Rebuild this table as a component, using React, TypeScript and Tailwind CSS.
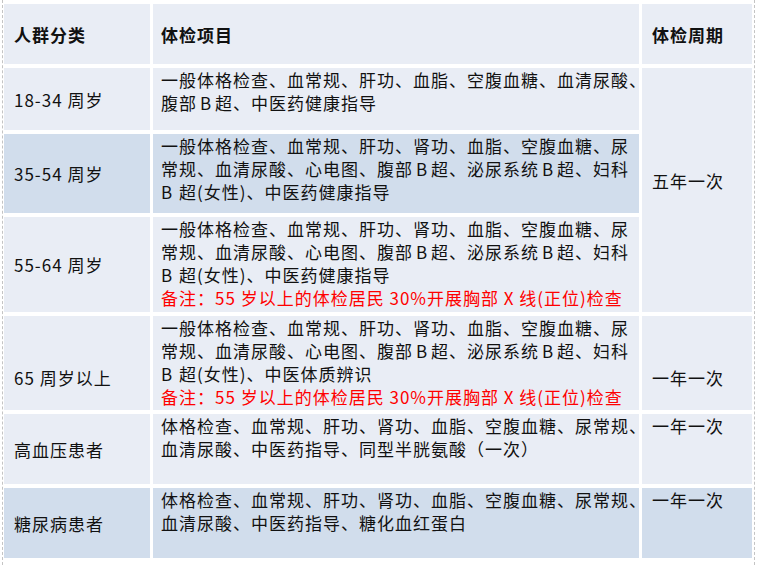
import type { ReactNode } from "react";

const light = "bg-[#e9edf5]";
const dark = "bg-[#d1ddec]";

const B = ({ start }: { start?: boolean }) => (
  <span className={`inline-block w-[18px] ${start ? "text-left" : "text-center"}`}>B</span>
);

const note = "备注：55 岁以上的体检居民 30%开展胸部 X 线(正位)检查";

const line1 = "一般体格检查、血常规、肝功、肾功、血脂、空腹血糖、尿";
const line2 = (
  <>
    常规、血清尿酸、心电图、腹部<B />超、泌尿系统<B />超、妇科
  </>
);

type Row = { group: string; bg: string; lines: ReactNode[]; note?: boolean; offset?: boolean };

const rows: Row[] = [
  {
    group: "18-34 周岁",
    bg: light,
    lines: [
      "一般体格检查、血常规、肝功、血脂、空腹血糖、血清尿酸、",
      <>
        腹部<B />超、中医药健康指导
      </>,
    ],
  },
  {
    group: "35-54 周岁",
    bg: dark,
    lines: [line1, line2, <><B start />超(女性)、中医药健康指导</>],
  },
  {
    group: "55-64 周岁",
    bg: light,
    lines: [line1, line2, <><B start />超(女性)、中医药健康指导</>],
    note: true,
  },
  {
    group: "65 周岁以上",
    bg: light,
    lines: [line1, line2, <><B start />超(女性)、中医体质辨识</>],
    note: true,
    offset: true,
  },
  {
    group: "高血压患者",
    bg: light,
    lines: ["体格检查、血常规、肝功、肾功、血脂、空腹血糖、尿常规、", "血清尿酸、中医药指导、同型半胱氨酸（一次）"],
  },
  {
    group: "糖尿病患者",
    bg: dark,
    lines: ["体格检查、血常规、肝功、肾功、血脂、空腹血糖、尿常规、", "血清尿酸、中医药指导、糖化血红蛋白"],
  },
];

export default function App() {
  return (
    <div className="h-[565px] w-[757px] bg-white font-['Noto_Sans_CJK_SC',sans-serif] text-[17px] leading-[23px] tracking-[1px] text-[#111]">
      <div className="ml-[2px] h-full w-[753px] border-x border-dashed border-[#c4c4c4] pl-[1px] pt-[4px]">
        <div className="grid grid-cols-[146px_486px_110px] grid-rows-[60px_62px_79px_95px_94px_70px_70px] gap-x-[3px] gap-y-[4px]">
          <div className={`${light} flex items-center pl-[10px] font-bold`}>人群分类</div>
          <div className={`${light} flex items-center pl-[8px] font-bold`}>体检项目</div>
          <div className={`${light} flex items-center pl-[10px] font-bold`}>体检周期</div>

          {rows.map((row, i) => (
            <>
              <div
                key={`g${i}`}
                className={`${row.bg} flex items-center pl-[10px] ${row.offset ? "pt-[28px]" : ""}`}
              >
                {row.group}
              </div>
              <div key={`l${i}`} className={`${row.bg} pl-[8px] whitespace-nowrap`}>
                {row.lines.map((line, j) => (
                  <div key={j}>{line}</div>
                ))}
                {row.note && <div className="text-[#ff0000]">{note}</div>}
              </div>
              {i === 0 && (
                <div className={`${light} row-span-3 pl-[10px] pt-[101px]`}>五年一次</div>
              )}
              {i === 3 && <div className={`${light} pl-[10px] pt-[50px]`}>一年一次</div>}
              {i === 4 && <div className={`${light} pl-[10px]`}>一年一次</div>}
              {i === 5 && <div className={`${dark} pl-[10px]`}>一年一次</div>}
            </>
          ))}
        </div>
      </div>
    </div>
  );
}
